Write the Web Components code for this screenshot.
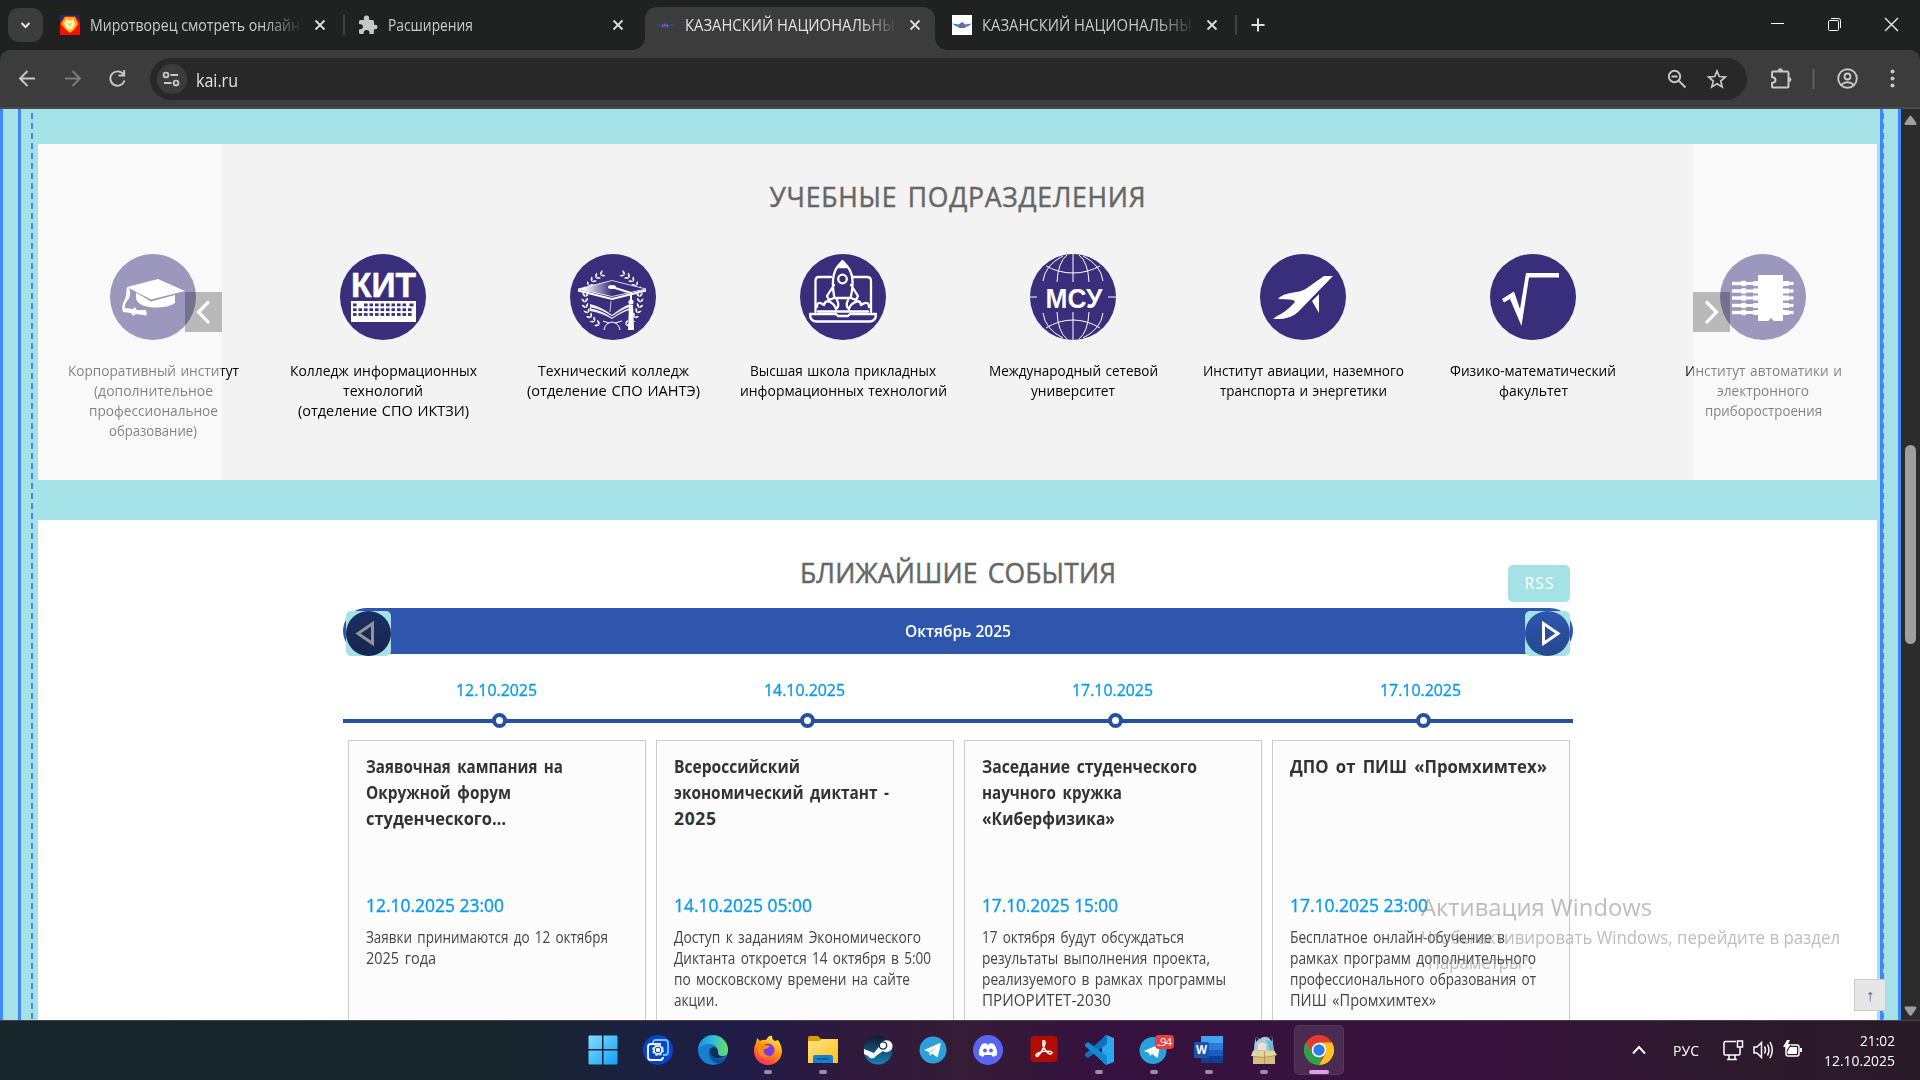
<!DOCTYPE html>
<html lang="ru"><head><meta charset="utf-8"><title>КАЗАНСКИЙ НАЦИОНАЛЬНЫЙ</title>
<style>
html,body{margin:0;height:100%;overflow:hidden;font-family:"Open Sans","Noto Sans",sans-serif}
</style></head><body>
<desktop-view></desktop-view>
<script>
class Base extends HTMLElement{
  connectedCallback(){ if(this.shadowRoot) return;
    const r=this.attachShadow({mode:'open'});
    const t=document.createElement('template'); t.innerHTML=this.view();
    r.appendChild(t.content.cloneNode(true)); }
  a(n){return this.getAttribute(n)||'';}
}
/* A single line of text set to a given width: condensed when it is too wide, letter-spaced when too narrow. */
class FitLine extends Base{
  view(){return `<style>:host{display:block;white-space:pre}span{display:inline-block;transform-origin:0 50%}</style><span><slot></slot></span>`}
  connectedCallback(){ super.connectedCallback(); queueMicrotask(()=>{
    const w=parseFloat(this.a('w')), s=this.shadowRoot.querySelector('span'), n=this.textContent.length;
    if(!w||n<2) return;
    const nat=s.getBoundingClientRect().width;
    if(nat>w){ s.style.transform=`scaleX(${(w/nat).toFixed(4)})`; }
    else s.style.letterSpacing=((w-nat)/(n-1)).toFixed(3)+'px';
    this.style.width=w+'px';
  });}
}
const P='#392e7b';
const lines=(s)=>s.split('|').map(x=>{const i=x.lastIndexOf('@');return `<fit-line w="${x.slice(i+1)}">${x.slice(0,i)}</fit-line>`}).join('');
function keys(){let s='';for(let r=0;r<3;r++)for(let i=0;i<11;i++){ if(r===0&&(i===1||i===10))continue; s+=`<rect x="${13+i*5.5}" y="${49.5+r*4.8}" width="3.6" height="2.8" fill="${P}"/>`;}return s+`<rect x="69.5" y="49.5" width="4" height="2.8" fill="${P}"/>`}
/* Two mirrored branches: pairs of leaves laid along an arc, tips pointing up along the branch. */
function laurel(){let b='';for(let i=0;i<12;i++){const t=208+i*11.4,a=t*Math.PI/180,x=42.5+Math.sin(a)*27.5,y=46-Math.cos(a)*28;
  for(const k of[-1,1]) b+=`<path transform="translate(${x.toFixed(1)} ${y.toFixed(1)}) rotate(${(t+k*38).toFixed(0)})" d="M0 0Q2.500 -2 5.500 0Q2.500 1.800 0 0Z"/>`;}
  return `<g>${b}</g><g transform="matrix(-1 0 0 1 85 0)">${b}</g>`}
const legs=()=>{let s='';for(const y of[29.5,37,44,51.5,58.5])s+=`<rect x="12" y="${y-1.7}" width="13" height="3.4"/><rect x="21.5" y="${y-2.7}" width="4.6" height="5.4"/><rect x="26" y="${y-1.5}" width="8" height="3"/><rect x="33" y="${y-2.5}" width="6" height="5"/><rect x="63" y="${y-2.5}" width="6" height="5"/><rect x="69" y="${y-1.6}" width="4.5" height="3.2"/>`;return s};
const UNIT={
cap:`<g fill="#fff"><path d="M17 33L48 25L75 37L41 45.500Z"/><path d="M26 38.500L41 47.500L65 41V49Q58 54 43 53.500Q27 52 26 44Z"/><path d="M18 33L20 36Q21 43 17 47Q14 51 15 54L23 55L25 53L27 56L36 56L37 61.500L26 60L23 62L21 59L13 58Q11 53 14 47Q17 42 16.500 34Z"/></g>`,
kit:`<text x="11" y="42.500" textLength="65" lengthAdjust="spacingAndGlyphs" font-family="Liberation Sans" font-weight="700" font-size="35.500" fill="#fff" stroke="#fff" stroke-width=".5">КИТ</text><rect x="11" y="47" width="65" height="21" fill="#fff"/>${keys()}`,
tech:`<g fill="#fff">${laurel()}</g><path d="M20 39V57L42 65L60 57V39L42 45Z" fill="${P}"/><path d="M20 50Q32 53 42 61Q52 53 60 50V56Q52 58 42 65Q32 59 20 57Z" fill="#fff" opacity=".92"/><path d="M21 54Q32 56 42 63Q52 56 60 53.500" stroke="${P}" stroke-width="1.200" fill="none"/><linearGradient id="b"><stop offset=".08" stop-color="#fff"/><stop offset=".5" stop-color="${P}"/></linearGradient><path d="M8 35L42 26.500L76 35L42 42.500Z" fill="url(#b)" stroke="#fff" stroke-width=".8"/><path d="M8 36.500L42 45L76 36.500" fill="none" stroke="#fff" stroke-width="2"/><path d="M41 47L40 58" stroke="#fff" stroke-width=".7"/><ellipse cx="42" cy="33" rx="4" ry="2" fill="#fff"/><path d="M42 33L61 39V50" fill="none" stroke="#fff" stroke-width="2"/><circle cx="61" cy="48" r="2.600" fill="#fff"/><path d="M59 51H63L64 76H58Z" fill="#fff"/><path d="M34 76Q35 69 42 68Q49 69 50 76M33 67L39 69M52 67L45 69" stroke="#fff" fill="none"/>`,
rocket:`<g fill="none" stroke="#fff" stroke-width="2.300" stroke-linejoin="round" stroke-linecap="round"><path d="M31 23H19Q15.500 23 15.500 27V58M53 23H67Q71 23 71 27V58"/><path d="M10 60H36L38 62H48L50 60H76Q76 67 70 67.500H16Q10 67 10 60Z"/><path d="M34.500 44Q30 22 38 12L42.500 7L47 12Q56 22 50.500 44ZM38 13H47M34 31L27 42L29 46L34 44M51 31L58 42L56 46L51 44"/><circle cx="42.500" cy="25" r="4.300"/><path d="M37 46Q40 52 36 55Q35 52 33 50Q26 44 24 51Q17 46 17 53M48 46Q45 52 49 55Q50 52 52 50Q60 44 61 51Q69 46 69 53M18 57.500H68"/></g><path d="M39 12L42.500 7L46 12Z" fill="#fff"/>`,
globe:`<g fill="none" stroke="#fff" stroke-width="1"><path d="M43 0V28M43 58V86M37 1Q28 8 27 28M49 1Q58 8 59 28M33 2Q15 11 13 27M53 2Q71 11 73 27M37 85Q28 78 27 58M49 85Q58 78 59 58M33 84Q15 75 13 59M53 84Q71 75 73 59M16 12Q29 19 43 19Q57 19 70 12M16 74Q29 66 43 66Q57 66 70 74M0 43H7M78 43H86"/></g><text x="15.500" y="53.500" textLength="57" lengthAdjust="spacingAndGlyphs" font-family="Liberation Sans" font-weight="700" font-size="27" fill="#fff">МСУ</text>`,
plane:`<path fill="#fff" d="M64 22H73L38 58Q30 66 13 65L17 62Q26 58 34 49L35 47Q33 45 18 45Q21 40 36 38Q43 37 47 34ZM52 47L59 40V59Z"/>`,
root:`<path fill="#fff" d="M12 45L24 37.500L30 55L36 19H69V23.500H39L31.500 72L20 45L14 48.500Z"/>`,
chip:`<g fill="#fff"><path d="M38 21H63V67H54L51 64L48 67H38Z"/>${legs()}</g>`};
class UnitCard extends Base{view(){return `<style>:host{display:flex;flex-direction:column;align-items:center;width:230px;flex:none;text-align:center;font-size:15px;line-height:20px;color:#000;word-spacing:1px}svg{width:86px;height:86px;display:block;margin-bottom:20px}fit-line{text-align:left}</style>
<svg viewBox="0 0 86 86"><circle cx="43" cy="43" r="43" fill="${P}"/>${UNIT[this.a('icon')]}</svg>${lines(this.a('text'))}`}}
class UnitsCarousel extends Base{view(){const u=[
['cap','Корпоративный институт@171|(дополнительное@119|профессиональное@129|образование)@88'],
['kit','Колледж информационных@187|технологий@80|(отделение СПО ИКТЗИ)@171'],
['tech','Технический колледж@151|(отделение СПО ИАНТЭ)@173'],
['rocket','Высшая школа прикладных@186|информационных технологий@207'],
['globe','Международный сетевой@169|университет@84'],
['plane','Институт авиации, наземного@201|транспорта и энергетики@167'],
['root','Физико-математический@166|факультет@69'],
['chip','Институт автоматики и@157|электронного@92|приборостроения@117']];
return `<style>:host{display:block;position:relative;height:336px;background:#f3f3f3;box-sizing:border-box;padding-top:33px;overflow:hidden}
.h{font-size:26.500px;line-height:40px;color:#666;display:flex;justify-content:center;-webkit-text-stroke:.45px #666;word-spacing:3px}
.row{display:flex;margin-top:37px}
.side{position:absolute;top:0;bottom:0;width:184px;background:rgba(255,255,255,.5);display:flex;padding-top:148px;box-sizing:border-box}
.l{left:0;justify-content:flex-end}.r{left:1655px}
.b{width:37px;height:40px;background:rgba(0,0,0,.255)}.b svg{width:37px;height:40px;display:block}</style>
<div class="h"><fit-line w="376">УЧЕБНЫЕ ПОДРАЗДЕЛЕНИЯ</fit-line></div>
<div class="row">${u.map(x=>`<unit-card icon="${x[0]}" text="${x[1]}"></unit-card>`).join('')}</div>
<div class="side l"><div class="b"><svg><path d="M23 10.500L13.500 20L23 30" fill="none" stroke="#fff" stroke-width="3.200" stroke-linecap="round"/></svg></div></div>
<div class="side r"><div class="b"><svg><path d="M14 10.500L23.500 20L14 30" fill="none" stroke="#fff" stroke-width="3.200" stroke-linecap="round"/></svg></div></div>`}}
class EventCard extends Base{view(){return `<style>:host{display:block;box-sizing:border-box;width:298px;height:330px;border:1px solid #ccc;background:#fcfcfc;padding:12px 17px}
.t{font-size:17.500px;line-height:26px;font-weight:700;color:#333;height:140px;word-spacing:3px}.d{font-size:17.500px;line-height:24px;color:#0a9be8;margin-bottom:9px;-webkit-text-stroke:.35px #0a9be8}.p{font-size:15.500px;line-height:21px;color:#444;word-spacing:2px;padding-top:.5px}</style>
<div class="t">${lines(this.a('title-lines'))}</div><div class="d">${lines(this.a('time'))}</div><div class="p">${lines(this.a('text'))}</div>`}}
class EventsPanel extends Base{view(){const e=[
['12.10.2025','Заявочная кампания на@197|Окружной форум@145|студенческого…@140','12.10.2025 23:00@138','Заявки принимаются до 12 октября@242|2025 года@70'],
['14.10.2025','Всероссийский@126|экономический диктант -@215|2025@42','14.10.2025 05:00@138','Доступ к заданиям Экономического@247|Диктанта откроется 14 октября в 5:00@257|по московскому времени на сайте@236|акции.@44'],
['17.10.2025','Заседание студенческого@215|научного кружка@140|«Киберфизика»@133','17.10.2025 15:00@136','17 октября будут обсуждаться@202|результаты выполнения проекта,@228|реализуемого в рамках программы@244|ПРИОРИТЕТ-2030@129'],
['17.10.2025','ДПО от ПИШ «Промхимтех»@257','17.10.2025 23:00@138','Бесплатное онлайн-обучение в@215|рамках программ дополнительного@246|профессионального образования от@246|ПИШ «Промхимтех»@146']];
return `<style>:host{display:block;background:#fff;height:500px;overflow:hidden}
.in{width:1230px;margin-left:305px;padding-top:33px}
.hd{display:grid;grid-template-columns:1fr auto 1fr;height:55px;align-items:start}
.h{font-size:26.500px;line-height:40px;color:#666;grid-column:2;-webkit-text-stroke:.45px #666;word-spacing:3px}
.rss{justify-self:end;margin:12px 3px 0 0;width:62px;height:37px;border-radius:5px;background:#a5e2e8;color:#fff;display:flex;justify-content:center;font-size:15.500px;line-height:37px}
.bar{height:46px;border-radius:23px;background:#2e56ad;display:flex;justify-content:space-between;align-items:flex-start;color:#fff;font-weight:600;font-size:16px;line-height:46px}
.nav{width:45px;height:45px;margin:3px 3px 0 3px;border-radius:5px;background:#a5e2e8}.nav svg{display:block;width:45px;height:45px}
.dates,.cards{display:grid;grid-template-columns:repeat(4,308px)}
.dates{margin-top:24px;font-size:16.800px;line-height:24px;color:#0a9be8;justify-items:center;-webkit-text-stroke:.35px #0a9be8}.dates fit-line{margin-right:1px}
.tl{display:grid;grid-template-columns:repeat(4,308px);justify-items:center;margin-top:11px;height:15px;background:linear-gradient(#2651a0,#2651a0) 0 6px/100% 4px no-repeat}
.tl i{box-sizing:border-box;width:15px;height:15px;border:4px solid #2651a0;border-radius:50%;background:#fff;margin-left:5px}
.cards{margin-top:12px;padding-left:5px}</style>
<div class="in"><div class="hd"><div class="h"><fit-line w="316">БЛИЖАЙШИЕ СОБЫТИЯ</fit-line></div><div class="rss"><fit-line w="29">RSS</fit-line></div></div>
<div class="bar"><div class="nav"><svg><linearGradient id="prev" x2="0" y2="1"><stop stop-color="#192f62"/><stop offset="1" stop-color="#162650"/></linearGradient><circle cx="22.500" cy="22.500" r="22.500" fill="url(#prev)"/><path d="M26.500 12.500V32.500L12 22.500Z" fill="none" stroke="#949494" stroke-width="3"/></svg></div>
<fit-line w="106">Октябрь 2025</fit-line>
<div class="nav"><svg><linearGradient id="next" x2="0" y2="1"><stop stop-color="#2e56ad"/><stop offset="1" stop-color="#25478f"/></linearGradient><circle cx="22.500" cy="22.500" r="22.500" fill="url(#next)"/><path d="M18.500 12.500V32.500L33 22.500Z" fill="none" stroke="#fff" stroke-width="3"/></svg></div></div>
<div class="dates">${e.map(x=>`<fit-line w="81">${x[0]}</fit-line>`).join('')}</div>
<div class="tl"><i></i><i></i><i></i><i></i></div>
<div class="cards">${e.map(x=>`<event-card title-lines="${x[1]}" time="${x[2]}" text="${x[3]}"></event-card>`).join('')}</div></div>`}}
class SitePage extends Base{view(){return `<style>:host{display:flex;height:911px;background:#a5e2e8;position:relative;overflow:hidden}
.l{width:38px;flex:none;background:linear-gradient(#3d87ff,#3d87ff) 0 0/3px 100% no-repeat,linear-gradient(#3d87ff,#3d87ff) 18px 0/3px 100% no-repeat,repeating-linear-gradient(#3d87ff 0 6px,transparent 6px 10px) 31px 4px/2px 100% no-repeat}
.m{width:1839px;flex:none;padding-top:35px;display:flex;flex-direction:column;gap:40px}
.r{width:24px;flex:none;background:linear-gradient(#3d87ff,#3d87ff) 3px 0/3px 100% no-repeat,repeating-linear-gradient(#3d87ff 0 6px,transparent 6px 10px) 5px 4px/2px 100% no-repeat,linear-gradient(#3d87ff,#3d87ff) 21px 0/3px 100% no-repeat}
.s{width:19px;flex:none;background:#2c2c2c;display:flex;flex-direction:column}.s svg{width:19px;height:911px;display:block}
.up{position:absolute;left:1854px;top:870px;width:32px;height:32px;box-sizing:border-box;border:1px solid #ccc;background:#e6e6e6;color:#555;font:16px/31px "Liberation Sans","DejaVu Sans",sans-serif;text-align:center}</style>
<div class="l"></div><div class="m"><units-carousel></units-carousel><events-panel></events-panel></div><div class="r"></div>
<div class="s"><svg fill="#9f9f9f"><path d="M9.500 6.500Q10.500 6.500 15.500 14.500Q15.500 16 14.500 16H4.500Q3.500 16 3.500 14.500Q8.500 6.500 9.500 6.500Z"/><rect x="4" y="336" width="11" height="199" rx="5.500"/><path d="M9.500 907Q10.500 907 15.500 899Q15.500 897.500 14.500 897.500H4.500Q3.500 897.500 3.500 899Q8.500 907 9.500 907Z"/></svg></div><div class="up">↑</div>`}}
const X=`<svg class="x" width="14" height="14"><path d="M2.500 2.500L11.500 11.500M11.500 2.500L2.500 11.500" stroke="#dedede" stroke-width="1.800"/></svg>`;
const puzzle=`<svg width="20" height="20"><path d="M1 6.500Q1 5 2.500 5H6Q5 0.500 8.500 .5Q12 .5 11 5H14.500Q16 5 16 6.500V10Q19.500 9 19.500 12Q19.500 15 16 14V18Q16 19 14.500 19H11.500Q12 15 8.500 15Q5.500 15 5.500 19H2.500Q1 19 1 17.500V14.500Q5 14.500 5 11.500Q5 9 1 9Z" fill="#c7c7c7"/></svg>`;
const wings=(c)=>`<path d="M0 8.500L7 9.500L8 8.500L10 7L12 8.500L13 9.500L20 8.500L17 10.500L16 11.500H14L13 13H7L6 11.500H4L3 10.500Z" fill="${c}"/><path d="M7 9L8.500 10.500L10 8.500L11.500 10.500L13 9V12L10 11L7 12Z" fill="#d84363"/>`;
class BrowserTab extends Base{view(){const f={
hero:`<svg width="20" height="20"><rect width="20" height="20" fill="#f90f08"/><path d="M0 0H20V7L15 1H5L0 7Z" fill="#15346f"/><path d="M5 2H15L18 9L14 15L10 18L5 14L1 9Z" fill="#ffad19"/><path d="M7 4L10 6L13 4L15 9L12 14L9 15L6 12L4 8Z" fill="#fff5c0"/><path d="M6 6L9 9L12 7L10 12Z" fill="#ffc845"/></svg>`,
puzzle,kai:`<svg width="20" height="20">${wings('#1a4f93')}</svg>`,kaiw:`<svg width="20" height="20"><rect width="20" height="20" fill="#fff"/>${wings('#2a80c0')}</svg>`}[this.a('icon')];
return `<style>:host{display:flex;align-items:center;box-sizing:border-box;height:43px;margin-top:7px;width:290px;flex:none;padding:0 13px 7px 10px;font-size:15.500px;line-height:24px;color:#c9cbca;position:relative}
:host([active]){background:#3c3c3c;border-radius:12px 12px 0 0;color:#e3e3e3}
:host([active])::before,:host([active])::after{content:"";position:absolute;bottom:0;width:12px;height:12px}
:host([active])::before{left:-12px;background:radial-gradient(circle at 0 0,transparent 11.500px,#3c3c3c 12px)}
:host([active])::after{right:-12px;background:radial-gradient(circle at 100% 0,transparent 11.500px,#3c3c3c 12px)}
svg{flex:none;display:block}.t{margin-left:10px;width:211px;overflow:hidden;flex:none}.fade{-webkit-mask-image:linear-gradient(90deg,#000 175px,transparent 213px)}.x{margin-left:auto}</style>
${f}<div class="t ${this.a('w')>200?'fade':''}"><fit-line w="${this.a('w')}">${this.a('label')}</fit-line></div>${X}`}}
class TabStrip extends Base{view(){return `<style>:host{display:flex;height:50px;background:#202221;align-items:flex-start;position:relative}
.s{width:35px;height:34px;border-radius:11px;background:#3c3c3c;margin:8px 7px 0 8px}.s svg{display:block}
.v{width:2px;height:20px;background:#404241;margin:15px -1px 0 -1px;z-index:1;flex:none}.plus{margin:18px 0 0 15px}.wc{margin:17px 21px 0 auto;display:flex;gap:42px}svg{display:block}
</style>
<div class="s"><svg width="35" height="34"><path d="M13.500 15L17.500 19L21.500 15" fill="none" stroke="#e3e3e3" stroke-width="2"/></svg></div>
<browser-tab style="width:294px;padding-right:17px" icon="hero" w="210" label="Миротворец смотреть онлайн"></browser-tab><div class="v"></div>
<browser-tab style="width:301px;padding-left:14px;padding-right:20px" icon="puzzle" w="85" label="Расширения"></browser-tab>
<browser-tab active icon="kai" w="221" label="КАЗАНСКИЙ НАЦИОНАЛЬНЫЙ"></browser-tab>
<browser-tab style="width:301px;padding-left:17px;padding-right:17px" icon="kaiw" w="221" label="КАЗАНСКИЙ НАЦИОНАЛЬНЫЙ"></browser-tab><div class="v"></div>
<svg class="plus" width="14" height="14"><path d="M7 .5V13.500M.5 7H13.500" stroke="#dedede" stroke-width="2"/></svg>
<div class="wc"><svg width="15" height="15"><path d="M1 6.500H14" stroke="#fff"/></svg><svg width="15" height="15" fill="none" stroke="#fff"><rect x="1.500" y="3.500" width="10" height="10" rx="1"/><path d="M4 1.500H11.500Q13.500 1.500 13.500 3.500V11"/></svg><svg width="15" height="15"><path d="M1 1L14 14M14 1L1 14" stroke="#fff" stroke-width="1.200"/></svg></div>`}}
class ToolBar extends Base{view(){return `<style>:host{display:block;background:#202221}
.t{height:59px;background:#3c3c3c;border-bottom:2px solid #4a4a4a;box-sizing:border-box;border-radius:10px 10px 0 0;display:flex;align-items:flex-start;padding-top:8px}
svg{display:block;flex:none;fill:none;stroke:#c7c7c7;stroke-width:1.900}.n{margin-top:11px}.o{width:1597px;height:42px;border-radius:21px;background:#282828;display:flex;align-items:center;box-sizing:border-box;padding:0 20px 0 7px;color:#e3e3e3;font-size:17.500px;line-height:24px}
.i{width:30px;height:30px;border-radius:50%;background:#3c3c3c;margin-right:9px}.o fit-line{padding-top:1px}</style>
<div class="t"><svg class="n" style="margin-left:17px" width="20" height="20"><path d="M18 9.500H3.500M10.500 2L3 9.500L10.500 17"/></svg>
<svg class="n" style="margin-left:26px;stroke:#7c7c7c" width="20" height="20"><path d="M2 9.500H16.500M9.500 2L17 9.500L9.500 17"/></svg>
<svg class="n" style="margin:11px 23px 0 24px" width="20" height="20"><path d="M16.500 5.500A7.200 7.200 0 1 0 17.500 11.500M17.200 1V6.500H11.500"/></svg>
<div class="o"><div class="i"><svg width="30" height="30"><circle cx="9" cy="11" r="2.400"/><path d="M13.500 11H21M7 19H14.500"/><circle cx="19" cy="19" r="2.400"/></svg></div><fit-line w="42">kai.ru</fit-line>
<svg style="margin-left:auto" width="20" height="20"><circle cx="7.500" cy="7.500" r="5.700"/><path d="M4.500 7.500H10.500M11.500 11.500L18.500 18.500"/></svg>
<svg style="margin-left:20px" width="20" height="20"><path d="M10 2L12.300 7.500L18.300 8L13.700 12L15.200 18L10 14.800L4.800 18L6.300 12L1.700 8L7.700 7.500Z" stroke-width="1.700"/></svg></div>
<svg style="margin:9px 0 0 23px" width="24" height="24"><path d="M3 4.500H17.500Q18.500 4.500 18.500 6V19.500Q18.500 20.500 17.500 20.500H3Q2 20.500 2 19.500V16Q5.500 15.500 5.500 13T2 10V5.500Q2 4.500 3 4.500Z" stroke-width="2"/><path d="M7.500 4Q8 1.200 10.300 1.200T13 4ZM19 10Q21.500 10.500 21.500 12.500T19 15Z" fill="#c7c7c7" stroke="none"/></svg>
<svg style="margin:11px 0 0 18px" width="3" height="20"><path d="M1.500 0V20" stroke="#5f5f5f" stroke-width="2"/></svg>
<svg style="margin:9px 0 0 21px" width="24" height="24"><circle cx="11.500" cy="11.500" r="9.300"/><circle cx="11.500" cy="9.500" r="3"/><path d="M5 18Q11.500 12.500 18 18"/></svg>
<svg style="margin:10px 0 0 29px;fill:#c7c7c7;stroke:none" width="6" height="22"><circle cx="3.500" cy="3.500" r="2"/><circle cx="3.500" cy="10.500" r="2"/><circle cx="3.500" cy="17.500" r="2"/></svg></div>`}}
const APPS={
win:`<defs><linearGradient id="g" x2="1" y2="1"><stop stop-color="#82dcff"/><stop offset="1" stop-color="#12a0f8"/></linearGradient></defs><path fill="url(#g)" d="M.5 1.500Q.5.500 1.500.5H14V14H.5ZM15.500.5H28.500Q29.500.5 29.500 1.500V14H15.500ZM.5 15.500H14V29.500H1.500Q.5 29.500.5 28.500ZM15.500 15.500H29.500V28.500Q29.500 29.500 28.500 29.500H15.500Z"/>`,
cam:`<circle cx="15" cy="15" r="15" fill="#0645c9"/><g fill="none" stroke-width="1.800"><path d="M10 8.500Q10 5 13 5H22Q25 5 25 8V17Q25 20 22 20H20" stroke="#73bff6"/><path d="M20 22Q20 25 17 25H8Q5 25 5 22V12Q5 9 8 9H18" stroke="#fff"/></g><circle cx="15" cy="15" r="5" fill="none" stroke="#8ccbf9" stroke-width="2.200" stroke-dasharray="2.600 1.300"/><circle cx="15" cy="15" r="4" fill="none" stroke="#fff" stroke-width="1.600"/><circle cx="15" cy="15" r="2.200" fill="#fff"/>`,
edge:`<defs><linearGradient id="g"><stop stop-color="#1893df"/><stop offset=".5" stop-color="#34bcd4"/><stop offset="1" stop-color="#70df57"/></linearGradient></defs><circle cx="15" cy="15" r="15" fill="#1580cf"/><path d="M1 10A15 15 0 0 1 30 15Q30 21 24 21Q18 21 20 17Q19 8 10 9Q4 9 0 15Z" fill="url(#g)"/><path d="M11 15Q10 27 21 29Q27 27 28 22Q23 25 18 22Q14 19 16 12Q12 12 11 15Z" fill="#0d549e"/><path d="M20 17Q20 12 15 12Q11 14 13 19Q15 23 20 23Q24 23 28 21Q19 22 20 17Z" fill="#162a58"/>`,
fox:`<defs><linearGradient id="g" x1=".8" x2=".3" y2="1"><stop stop-color="#fff44f"/><stop offset=".45" stop-color="#ff980e"/><stop offset="1" stop-color="#ff2a5b"/></linearGradient></defs><path d="M3 8L4 3L7 6Q10 4 13 5Q16 0 19 1Q19 5 22 6L25 5Q29 11 29 16A14 14 0 0 1 1 16Q1 11 3 8Z" fill="url(#g)"/><circle cx="15" cy="15" r="6.500" fill="#7a3ae0"/><path d="M4 9Q9 8 11 10L17 11Q15 14 11 14Q9 20 17 21Q8 25 5 17Z" fill="#ff8b16"/>`,
folder:`<path d="M0 3Q0 1 2 1H10L13 4H29V12H0Z" fill="#dc9903"/><defs><linearGradient id="g" x2="1" y2="1"><stop stop-color="#ffe385"/><stop offset="1" stop-color="#ffc01b"/></linearGradient></defs><path d="M0 6H11L14 4H30V28H0Z" fill="url(#g)"/><path d="M5 28V22Q5 20 7 20H23Q25 20 25 22V28Z" fill="#1780d2"/><path d="M9 24H21" stroke="#0c5591" stroke-width="1.500"/>`,
steam:`<defs><linearGradient id="g" x2="0" y2="1"><stop stop-color="#10182f"/><stop offset="1" stop-color="#1683b8"/></linearGradient></defs><circle cx="15" cy="15" r="14.500" fill="url(#g)"/><path d="M1 14L11 18L18 9A6 6 0 1 1 20 16L13 21A4.500 4.500 0 0 1 5 21L1 19Z" fill="#f5f7f8"/><circle cx="20" cy="10.500" r="4.300" fill="#182747"/><circle cx="20" cy="10.500" r="3" fill="#fff"/>`,
tg:`<circle cx="15" cy="15" r="13.500" fill="#2ba0db"/><path d="M6 15L22 8Q23 8 22.500 10L20 21Q19.500 22.500 18 21.500L14 18.500L12 21L11 17Z" fill="#fff"/><path d="M11 17L19 11L13 18Z" fill="#b6d9eb"/>`,
discord:`<circle cx="15" cy="15" r="15" fill="#5765f2"/><path d="M9 9L13 8L14 9.500H16L17 8L21 9Q25 15 24 20L20 22L18.500 20H11.500L10 22L6 20Q5 15 9 9Z" fill="#fff"/><ellipse cx="12" cy="15.500" rx="1.900" ry="2" fill="#5765f2"/><ellipse cx="18" cy="15.500" rx="1.900" ry="2" fill="#5765f2"/>`,
pdf:`<rect x="1.500" y="1" width="27" height="26" rx="4" fill="#b30b00"/><path d="M14 6Q16 5 16 8Q15 14 9 21Q7 22 7 20Q9 17 17 16Q23 16 23 18Q22 20 19 18Q13 13 14 6Z" fill="none" stroke="#fff" stroke-width="1.600"/>`,
code:`<path d="M22 0L30 3V27L22 30L18 26V4Z" fill="#2aa7ef"/><path d="M20 2L22 0L23 1V9L4 23L1 21V19Z" fill="#0c73bd"/><path d="M20 28L22 30L23 29V21L4 7L1 9V11Z" fill="#1189d0"/>`,
tgb:`<circle cx="14" cy="15.500" r="13.500" fill="#2ba0db"/><path d="M5 16L21 9L19 22Q18 23 17 22L13 19L11 21L10 18Z" fill="#fff"/><rect x="16" y="0" width="19" height="14" rx="4" fill="#ec3c3b"/><text x="17.500" y="11" font-size="11.500" fill="#fff" font-family="Open Sans" textLength="15.500">..94</text>`,
word:`<rect x="7" y="1" width="22" height="27" rx="1" fill="#1a5dbe"/><path d="M7 1H29V8H7Z" fill="#41a5ee"/><path d="M7 8H29V15H7Z" fill="#2b7cd3"/><path d="M7 21H29V28H7Z" fill="#103f91"/><rect x="0" y="7" width="15" height="16" rx="1.500" fill="#1a54b2"/><text x="2" y="19" font-size="12" font-weight="700" fill="#fff" font-family="Open Sans" textLength="11" lengthAdjust="spacingAndGlyphs">W</text>`,
box:`<path d="M7 2L11 4Q15 0 20 3L23 1L25 16H5Q5 8 7 2Z" fill="#9bd0df"/><path d="M7 2L10 4L7 7ZM20 3L23 1V7Z" fill="#26252d"/><path d="M9 9Q13 6 17 9V15H9Z" fill="#f7ddd4"/><path d="M17 5L19 9L20 16H24V6Z" fill="#78b6ce"/><path d="M4 16H26V29H4Z" fill="#d8bf7f"/><path d="M4 15.500L15 16V22L2 21ZM15 16L25 15.500L28 20L17 22Z" fill="#e7d49b"/><path d="M15.500 16V29M4 21.500L15 22.500L27 20.500" stroke="#aa9059" fill="none" stroke-width=".8"/>`,
chrome:`<circle cx="15" cy="15" r="15" fill="#e33b2e"/><path d="M15 7.500H28A15 15 0 0 1 15 30L22 18Z" fill="#fcc31e"/><path d="M2 7.500L8 18Q12 23 18 22L15 30A15 15 0 0 1 2 7.500Z" fill="#2ba24c"/><circle cx="15" cy="15" r="7.300" fill="#fff"/><circle cx="15" cy="15" r="5.700" fill="#2b7de9"/>`};
class TaskApp extends Base{view(){return `<style>:host{display:flex;flex-direction:column;align-items:center;box-sizing:border-box;width:50px;height:50px;padding-top:10px;border-radius:5px;flex:none}:host([on]){background:rgba(255,255,255,.1);box-shadow:inset 0 0 0 1px rgba(255,255,255,.06)}svg{overflow:visible;display:block}i{width:8px;height:4px;border-radius:2px;background:#9b8ea5;margin-top:5px}:host([on]) i{width:20px;background:#e0a0e8}</style>
<svg width="30" height="30">${APPS[this.a('app')]}</svg>${this.hasAttribute('run')?'<i></i>':''}`}}
class TaskBar extends Base{view(){return `<style>:host{display:flex;box-sizing:border-box;height:60px;border-top:1px solid #45424c;background:linear-gradient(90deg,#17262b 0,#18252b 500px,#1a2140 640px,#201c48 740px,#30193c 850px,#351c36 970px,#35123f 1090px,#38133d 1500px,#2d192e 1700px,#2a1b29 1920px);padding:4px 25px 0 577.500px;color:#fff}
.a{display:flex;gap:5.140px}.tray{display:flex;margin-left:auto;font-size:15px;line-height:20px}.tray svg{display:block;fill:none;stroke:#fff;stroke-width:1.500}.c{display:flex;flex-direction:column;align-items:flex-end;margin-left:20px;padding-top:5px}</style>
<div class="a">${['win','cam','edge','fox','folder','steam','tg','discord','pdf','code','tgb','word','box','chrome'].map(n=>`<task-app app="${n}" ${['fox','folder','code','tgb','word','box','chrome'].includes(n)?'run':''} ${n==='chrome'?'on':''}></task-app>`).join('')}</div>
<div class="tray"><svg width="16" height="12" style="margin:19px 26px 0 0"><path d="M2 9.500L8 3L14 9.500" stroke-width="2"/></svg><fit-line w="26" style="padding-top:15px">РУС</fit-line>
<svg width="22" height="22" style="margin:14px 0 0 23px"><path d="M14 2.500H3.500Q2 2.500 2 4V15Q2 16 3.500 16H16.500Q18 16 18 15V12M7 16V20M13 16V20M5 20.500H15M15.500 2H20.500V8H15.500ZM18 8V12"/></svg>
<svg width="24" height="20" style="margin:15px 0 0 8px"><path d="M2 7H5L9.500 2.500V17.500L5 13H2ZM12.500 6.500Q14.500 10 12.500 13.500M15.500 4.500Q18.500 10 15.500 15.500M18 2Q22.500 10 18 18"/></svg>
<svg width="22" height="20" style="margin:14px 0 0 6px"><path d="M4 8V15Q4 17 6 17H15Q17 17 17 15V8Q17 6 15 6H9"/><path d="M8 8H15V15H5.500V12ZM18 9H20V13H18ZM5 1L1 8H4V12L9 5H6L8 1Z" fill="#fff" stroke="none"/></svg>
<div class="c"><fit-line w="35">21:02</fit-line><fit-line w="71">12.10.2025</fit-line></div></div>`}}
class ActivationNote extends Base{view(){return `<style>:host{position:absolute;left:1421px;top:889px;color:rgba(145,145,145,.6);font-size:17.500px;line-height:25px;pointer-events:none}.b{font-size:24px;line-height:36px}</style><fit-line class="b" w="231">Активация Windows</fit-line><fit-line w="419">Чтобы активировать Windows, перейдите в раздел</fit-line><fit-line w="112">"Параметры".</fit-line>`}}
class DesktopView extends Base{view(){return `<style>:host{display:flex;flex-direction:column;width:1920px;height:1080px;position:relative;overflow:hidden}</style><tab-strip></tab-strip><tool-bar></tool-bar><site-page></site-page><task-bar></task-bar><activation-note></activation-note>`}}
for(const [n,c] of Object.entries({'fit-line':FitLine,'unit-card':UnitCard,'units-carousel':UnitsCarousel,'event-card':EventCard,'events-panel':EventsPanel,'site-page':SitePage,'browser-tab':BrowserTab,'tab-strip':TabStrip,'tool-bar':ToolBar,'task-app':TaskApp,'task-bar':TaskBar,'activation-note':ActivationNote,'desktop-view':DesktopView})) customElements.define(n,c);
</script></body></html>
